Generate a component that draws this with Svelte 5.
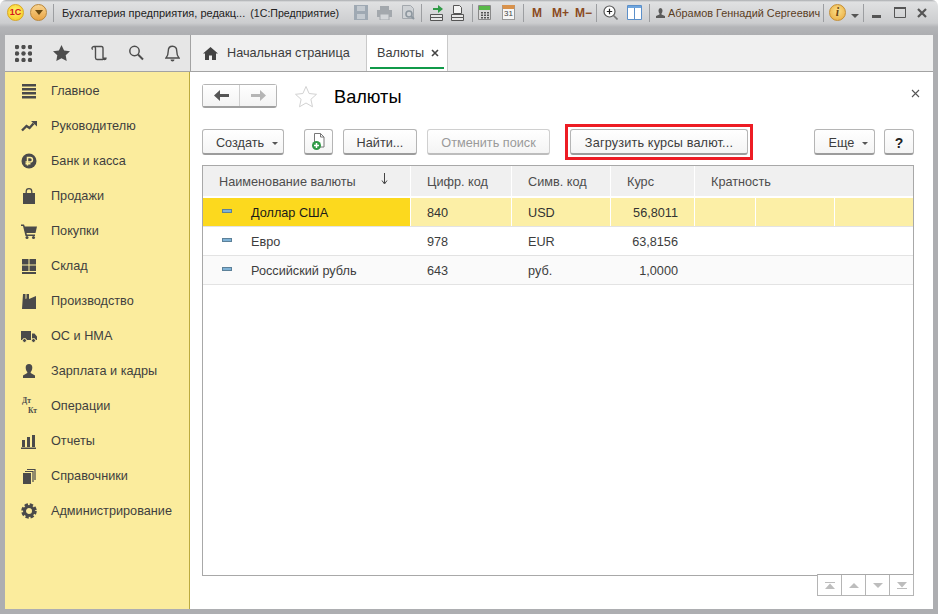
<script>
  const menu = [
    { label: 'Главное', icon: 'menu' },
    { label: 'Руководителю', icon: 'trend' },
    { label: 'Банк и касса', icon: 'ruble' },
    { label: 'Продажи', icon: 'bag' },
    { label: 'Покупки', icon: 'cart' },
    { label: 'Склад', icon: 'stock' },
    { label: 'Производство', icon: 'factory' },
    { label: 'ОС и НМА', icon: 'truck' },
    { label: 'Зарплата и кадры', icon: 'person' },
    { label: 'Операции', icon: 'dtkt' },
    { label: 'Отчеты', icon: 'bars' },
    { label: 'Справочники', icon: 'books' },
    { label: 'Администрирование', icon: 'gear' }
  ];

  const rows = [
    { name: 'Доллар США', code: '840', sym: 'USD', rate: '56,8011', selected: true },
    { name: 'Евро', code: '978', sym: 'EUR', rate: '63,8156' },
    { name: 'Российский рубль', code: '643', sym: 'руб.', rate: '1,0000', alt: true }
  ];
</script>

<div class="window">
  <header class="titlebar">
    <span class="logo">1С</span>
    <span class="menu-btn"><svg width="8" height="5" viewBox="0 0 8 5"><path d="M0 0h8L4 5z" fill="#6b4a12"/></svg></span>
    <span class="sep s1"></span>
    <span class="title-text">Бухгалтерия предприятия, редакц...&nbsp; <span class="app-name">(1С:Предприятие)</span></span>

    <svg class="ti t-save" width="14" height="15" viewBox="0 0 14 15"><path d="M0 0h14v15H0z" fill="#9fa9b3"/><path d="M3 1h8v5H3zM3 9h8v5H3z" fill="#c4cad0"/></svg>
    <svg class="ti t-print" width="15" height="14" viewBox="0 0 15 14"><path d="M3 0h9v4H3zM0 4h15v7H0z" fill="#a3a8ad"/><path d="M3 8h9v6H3z" fill="#d3d6d9" stroke="#a3a8ad"/></svg>
    <svg class="ti t-prev" width="15" height="15" viewBox="0 0 15 15"><path d="M1.5.5h8l3 3v10h-11z" fill="#cfd2d5" stroke="#a3a8ad"/><circle cx="8" cy="9" r="3" fill="none" stroke="#8d979f" stroke-width="1.6"/><path d="M10 11l3 3" stroke="#8d979f" stroke-width="2"/></svg>
    <span class="sep s2"></span>
    <svg class="ti t-imp" width="15" height="16" viewBox="0 0 15 16"><path d="M4 3h5V0l5 4-5 4V5H4z" fill="#2f9a46"/><path d="M1.5 9.5h12v3h-12zM1.5 12.5h12v3h-12z" fill="#e6e6e6" stroke="#555"/></svg>
    <svg class="ti t-exp" width="15" height="16" viewBox="0 0 15 16"><path d="M3.5.5h6l2 2v6h-8z" fill="#f4f4f4" stroke="#555"/><path d="M1.5 9.5h12v3h-12zM1.5 12.5h12v3h-12z" fill="#e6e6e6" stroke="#555"/></svg>
    <span class="sep s3"></span>
    <svg class="ti t-calc" width="13" height="15" viewBox="0 0 13 15"><path d="M.5.5h12v14H.5z" fill="#d9d9d9" stroke="#888"/><path d="M1 1h11v4H1z" fill="#58b848"/><path d="M3 7h2v1.5H3zM6 7h2v1.5H6zM9 7h2v1.5H9zM3 9.5h2V11H3zM6 9.5h2V11H6zM9 9.5h2V11H9zM3 12h2v1.5H3zM6 12h2v1.5H6zM9 12h2v1.5H9z" fill="#555"/></svg>
    <span class="cal t-cal">31</span>
    <span class="sep s4"></span>
    <span class="mem m0">M</span>
    <span class="mem m1">M+</span>
    <span class="mem m2">M−</span>
    <span class="sep s5"></span>
    <svg class="ti t-zoom" width="15" height="15" viewBox="0 0 15 15"><circle cx="6.5" cy="6.5" r="5.5" fill="#fff" stroke="#555" stroke-width="1.2"/><path d="M3.8 6.5h5.4M6.5 3.8v5.4" stroke="#222" stroke-width="1.2"/><path d="M10.5 10.5l4 4" stroke="#777" stroke-width="1.6"/></svg>
    <svg class="ti t-panel" width="15" height="15" viewBox="0 0 15 15"><path d="M.5.5h14v14H.5z" fill="#fff" stroke="#5b8fc9"/><path d="M1 1h13v2H1z" fill="#6ea5de"/><path d="M7.5 3v11" stroke="#5b8fc9"/></svg>
    <span class="sep s6"></span>
    <svg class="ti t-user" width="9" height="10" viewBox="0 0 9 10"><path d="M2.5 2.5a2 2.500 0 0 1 4 0c0 1.500-.6 2.500-1 3v1l3.500 1.500V10H0V8l3.500-1.500v-1c-.4-.5-1-1.500-1-3z" fill="#5b5b5b"/></svg>
    <span class="user-name">Абрамов Геннадий Сергеевич</span>
    <span class="sep s7"></span>
    <span class="info">i</span>
    <svg class="ti t-drop" width="8" height="4" viewBox="0 0 8 4"><path d="M0 0h8L4 4z" fill="#555"/></svg>
    <span class="sep s8"></span>
    <svg class="ti t-min" width="9" height="3" viewBox="0 0 9 3"><path d="M0 0h9v3H0z" fill="#555"/></svg>
    <svg class="ti t-max" width="12" height="11" viewBox="0 0 12 11"><path d="M.5 1h11v9.500H.5z" fill="none" stroke="#555"/><path d="M0 0h12v2H0z" fill="#555"/></svg>
    <svg class="ti t-close" width="10" height="10" viewBox="0 0 10 10"><path d="M1 1l8 8M9 1l-8 8" stroke="#555" stroke-width="2.200"/></svg>
  </header>

  <div class="frame">
    <div class="topbar">
      <div class="tools">
        <svg width="17" height="17" viewBox="0 0 17 17" fill="#4d4d4d">
          {#each [2, 8.500, 15] as y}
            {#each [2, 8.500, 15] as x}
              <circle cx={x} cy={y} r="2.200" />
            {/each}
          {/each}
        </svg>
        <svg width="17" height="16" viewBox="0 0 17 16"><path d="M8.500 0l2.600 5.400 5.900.8-4.300 4.100 1 5.700-5.200-2.800L3.300 16l1-5.700L0 6.200l5.900-.8z" fill="#4d4d4d"/></svg>
        <svg width="16" height="16" viewBox="0 0 16 16"><path d="M3 1.500h7.500c1 0 1.500.8 1.500 2V13c0 1 .6 1.500 1.500 1.500S15 14 15 13.200h-3M12 14.500H6c-1 0-1.500-.7-1.500-1.700V3.500c0-1.200-.6-2-1.500-2S1 2.300 1 3.200c0 .6.300 1 .8 1.300" fill="none" stroke="#4d4d4d" stroke-width="1.400"/></svg>
        <svg width="16" height="16" viewBox="0 0 16 16"><circle cx="6.500" cy="6" r="4.700" fill="none" stroke="#4d4d4d" stroke-width="1.500"/><path d="M10 9.500l5 5" stroke="#4d4d4d" stroke-width="2"/></svg>
        <svg width="15" height="17" viewBox="0 0 15 17"><path d="M7.500 1.200c-2.800 0-4.200 2-4.200 4.500 0 3.500-.8 5.500-2.300 7.300h13c-1.500-1.800-2.300-3.800-2.300-7.300 0-2.500-1.400-4.500-4.200-4.500z" fill="none" stroke="#4d4d4d" stroke-width="1.400"/><path d="M5.500 14.500a2 2 0 0 0 4 0z" fill="#4d4d4d"/></svg>
      </div>
      <nav class="tabs">
        <div class="tab home">
          <svg width="15" height="13" viewBox="0 0 15 13"><path d="M7.500 0L15 6.500h-2V13H9V8.500H6V13H2V6.500H0z" fill="#444"/></svg>
          <span>Начальная страница</span>
        </div>
        <div class="tab current">
          <span>Валюты</span>
          <svg width="8" height="8" viewBox="0 0 8 8"><path d="M1 1l6 6M7 1L1 7" stroke="#444" stroke-width="1.600"/></svg>
        </div>
      </nav>
    </div>

    <div class="body">
      <aside class="sidebar">
        {#each menu as item}
          <div class="side-item">
            <span class="side-icon">
              {#if item.icon === 'dtkt'}
                <span class="dt">Дт</span><span class="kt">Кт</span>
              {:else}
                <svg width="16" height="16" viewBox="0 0 16 16" fill="#4a4a4a">
                  {#if item.icon === 'menu'}
                    <path d="M1 1h14v2.500H1zM1 5h14v2.500H1zM1 9h14v2.500H1zM1 13h14v2.500H1z" />
                  {:else if item.icon === 'trend'}
                    <path d="M1 12.500l4.500-4.500 3 2 4-4.500" fill="none" stroke="#4a4a4a" stroke-width="2.400" />
                    <path d="M10 3h6v5.500z" />
                  {:else if item.icon === 'ruble'}
                    <circle cx="8" cy="8" r="7.500" />
                    <path d="M6.500 12.500V4.500h2.700a2 2 0 0 1 0 4.500H4.500M4.500 10.800h5" fill="none" stroke="#fbec9d" stroke-width="1.500" />
                  {:else if item.icon === 'bag'}
                    <path d="M2 5h12v11H2z" />
                    <path d="M5.200 7V3.500a2.800 2.800 0 0 1 5.600 0V7" fill="none" stroke="#4a4a4a" stroke-width="1.300" />
                  {:else if item.icon === 'cart'}
                    <path d="M0 1.500h3l.8 2H16l-1.500 6.500H5.500l.4 1.500H14V13H4.500L2 3H0z" />
                    <circle cx="6" cy="14.500" r="1.500" /><circle cx="12.500" cy="14.500" r="1.500" />
                  {:else if item.icon === 'stock'}
                    <path d="M1 1h6.500v5.500H1zM8.500 1H15v5.500H8.500zM1 7.500h6.500V13H1zM8.500 7.500H15V13H8.500zM1 14h14v2H1z" />
                  {:else if item.icon === 'factory'}
                    <path d="M2 1h2.500v5l1-.5V1H8v5l7-3v2.500L15 16H1z" />
                  {:else if item.icon === 'truck'}
                    <path d="M0 3h10v9H0zM11 5.500h2.500L16 8.500V12h-5z" />
                    <circle cx="3.500" cy="12.500" r="2" stroke="#fbec9d" /><circle cx="12.500" cy="12.500" r="2" stroke="#fbec9d" />
                  {:else if item.icon === 'person'}
                    <path d="M8 1c2.200 0 3.300 1.500 3.300 3.500S10.500 8 9.700 9v1l4.300 2.500V15H2v-2.500L6.300 10V9C5.500 8 4.700 6.500 4.700 4.500S5.800 1 8 1z" />
                  {:else if item.icon === 'bars'}
                    <path d="M1 7h3v7H1zM6 4h3v10H6zM11 2h3v12h-3zM0 14.500h15V16H0z" />
                  {:else if item.icon === 'books'}
                    <path d="M2 5h8v11H2z" />
                    <path d="M4 3.500h8V14M6 1.500h8V12" fill="none" stroke="#4a4a4a" stroke-width="1.200" />
                  {:else if item.icon === 'gear'}
                    <circle cx="8" cy="8" r="4.500" fill="none" stroke="#4a4a4a" stroke-width="3" />
                    <circle cx="8" cy="8" r="6.500" fill="none" stroke="#4a4a4a" stroke-width="2.500" stroke-dasharray="3.300 1.800" />
                  {/if}
                </svg>
              {/if}
            </span>
            <span>{item.label}</span>
          </div>
        {/each}
      </aside>

      <main class="content">
        <div class="head">
          <div class="nav-group">
            <span class="nav-btn">
              <svg width="15" height="11" viewBox="0 0 15 11"><path d="M6 0v4h9v3H6v4L0 5.500z" fill="#555"/></svg>
            </span>
            <span class="nav-btn">
              <svg width="15" height="11" viewBox="0 0 15 11"><path d="M9 0v4H0v3h9v4l6-5.500z" fill="#b5b5b5"/></svg>
            </span>
          </div>
          <svg class="fav" width="24" height="24" viewBox="0 0 24 24"><path d="M12 1.500l3.100 7 7.400.8-5.600 5 1.600 7.500-6.500-3.800-6.500 3.800 1.600-7.500-5.600-5 7.400-.8z" fill="#fff" stroke="#d2d2d2"/></svg>
          <h1>Валюты</h1>
          <svg class="close" width="9" height="9" viewBox="0 0 9 9"><path d="M1 1l7 7M8 1L1 8" stroke="#555" stroke-width="1.100"/></svg>
        </div>

        <div class="toolbar">
          <button class="btn create">Создать <i class="caret"></i></button>
          <button class="btn add">
            <svg width="15" height="18" viewBox="0 0 15 18"><path d="M3.500.5h6l3.500 3.500v10h-9.500z" fill="#fff" stroke="#777"/><path d="M9.500.5V4H13" fill="none" stroke="#777"/><circle cx="5.500" cy="12.500" r="4.500" fill="#2f9a46"/><path d="M3 12.500h5M5.500 10v5" stroke="#fff" stroke-width="1.500"/></svg>
          </button>
          <button class="btn find">Найти...</button>
          <button class="btn cancel">Отменить поиск</button>
          <span class="highlight"><button class="btn load">Загрузить курсы валют...</button></span>
          <button class="btn more">Еще <i class="caret"></i></button>
          <button class="btn help">?</button>
        </div>

        <div class="grid">
          <div class="row header">
            <div class="cell c-name">
              Наименование валюты
              <svg class="sort" width="7" height="12" viewBox="0 0 7 12"><path d="M3.500 0v10M1 7.500l2.500 3.500L6 7.500" fill="none" stroke="#444"/></svg>
            </div>
            <div class="cell c-code">Цифр. код</div>
            <div class="cell c-sym">Симв. код</div>
            <div class="cell c-rate">Курс</div>
            <div class="cell c-mult">Кратность</div>
          </div>
          {#each rows as row}
            <div class="row data" class:selected={row.selected} class:alt={row.alt}>
              <div class="cell c-name name-cell"><i class="mark"></i>{row.name}</div>
              <div class="cell c-code">{row.code}</div>
              <div class="cell c-sym">{row.sym}</div>
              <div class="cell c-rate num">{row.rate}</div>
              <div class="cell c-mult"></div>
              {#if row.selected}
                <div class="cell c-extra"></div>
                <div class="cell c-extra2"></div>
              {/if}
            </div>
          {/each}
          <div class="pager">
            <span><svg width="10" height="7" viewBox="0 0 10 7"><path d="M0 0h10v1H0zM5 1.500L10 7H0z" fill="#bdbdbd"/></svg></span>
            <span><svg width="10" height="5" viewBox="0 0 10 5"><path d="M5 0L10 5H0z" fill="#bdbdbd"/></svg></span>
            <span><svg width="10" height="5" viewBox="0 0 10 5"><path d="M5 5L10 0H0z" fill="#bdbdbd"/></svg></span>
            <span><svg width="10" height="7" viewBox="0 0 10 7"><path d="M0 7h10V6H0zM5 5.500L10 0H0z" fill="#bdbdbd"/></svg></span>
          </div>
        </div>
      </main>
    </div>
  </div>
</div>

<style>
  :global(body) {
    background: #fff;
    font-family: "Liberation Sans", Arial, sans-serif;
  }

  .window {
    width: 938px;
    height: 614px;
    box-sizing: border-box;
    display: flex;
    flex-direction: column;
    padding: 0 5px 5px;
    border-radius: 6px 6px 0 0;
    background: linear-gradient(#a9abae 0, #e0e1e2 2px, #cccdcf 23px, #b4b5b8 27px, #adaeb1 35px, #adaeb1 100%);
    overflow: hidden;
  }

  .titlebar {
    height: 35px;
    flex: none;
    display: flex;
    align-items: center;
    padding-bottom: 10px;
    box-sizing: border-box;
    font-size: 11px;
    color: #222;
  }

  .ti { flex: none; }

  .logo {
    width: 17px;
    height: 17px;
    margin-left: 2px;
    border-radius: 50%;
    background: radial-gradient(circle at 50% 40%, #fff36b, #f6c51c);
    border: 1px solid #d9a521;
    box-sizing: border-box;
    color: #d6141c;
    font: bold 9px/15px "Liberation Sans", sans-serif;
    text-align: center;
  }

  .menu-btn {
    width: 17px;
    height: 17px;
    margin-left: 6px;
    border-radius: 50%;
    background: linear-gradient(#f8d490, #e9a444);
    border: 1px solid #b9863a;
    box-sizing: border-box;
    display: flex;
    align-items: center;
    justify-content: center;
  }

  .sep {
    width: 1px;
    height: 18px;
    flex: none;
    background: #9c9ea1;
  }
  .s1 { margin-left: 6px; }
  .title-text { margin-left: 8px; white-space: nowrap; width: 284px; }
  .app-name { font-size: 10.600px; margin-left: -1px; }
  .t-save { margin-left: 8px; }
  .t-print { margin-left: 9px; }
  .t-prev { margin-left: 9px; }
  .s2 { margin-left: 5px; }
  .t-imp { margin-left: 7px; }
  .t-exp { margin-left: 6px; }
  .s3 { margin-left: 7px; }
  .t-calc { margin-left: 5px; }
  .cal {
    margin-left: 11px;
    width: 13px;
    height: 15px;
    box-sizing: border-box;
    border: 1px solid #999;
    border-top: 4px solid #d9924b;
    background: #f6f6f6;
    font: 8px/10px "Liberation Sans", sans-serif;
    color: #444;
    text-align: center;
    flex: none;
  }
  .s4 { margin-left: 8px; }
  .mem { color: #8a4a22; font-weight: bold; font-size: 12px; flex: none; }
  .m0 { margin-left: 8px; }
  .m1 { margin-left: 10px; }
  .m2 { margin-left: 6px; }
  .s5 { margin-left: 4px; }
  .t-zoom { margin-left: 6px; }
  .t-panel { margin-left: 9px; }
  .s6 { margin-left: 7px; }
  .t-user { margin-left: 6px; }
  .user-name { margin-left: 3px; width: 152px; white-space: nowrap; color: #5a3d1e; font-size: 10.900px; }
  .s7 { margin-left: 3px; }
  .info {
    width: 17px;
    height: 17px;
    margin-left: 5px;
    flex: none;
    border-radius: 50%;
    background: radial-gradient(circle at 50% 40%, #fbe08a, #e8a83c);
    border: 1px solid #c48f34;
    box-sizing: border-box;
    color: #6b4412;
    font: italic bold 12px/15px "Liberation Serif", serif;
    text-align: center;
  }
  .t-drop { margin-left: 5px; margin-top: 7px; }
  .s8 { margin-left: 4px; }
  .t-min { margin-left: 8px; margin-top: 7px; }
  .t-max { margin-left: 13px; }
  .t-close { margin-left: 11px; }

  .frame {
    flex: 1;
    min-height: 0;
    display: flex;
    flex-direction: column;
    background: #fff;
  }

  .topbar {
    height: 37px;
    flex: none;
    display: flex;
    background: #f0f0f0;
    border-bottom: 1px solid #a3a3a3;
    box-sizing: border-box;
  }

  .tools {
    width: 186px;
    flex: none;
    box-sizing: border-box;
    display: flex;
    align-items: center;
    gap: 21px;
    padding-left: 10px;
    background: #e6e6e6;
    border-right: 1px solid #a3a3a3;
  }

  .tabs { display: flex; font-size: 12.700px; color: #3d3d3d; }

  .tab {
    height: 100%;
    box-sizing: border-box;
    display: flex;
    align-items: center;
  }

  .home {
    width: 176px;
    padding-left: 12px;
    gap: 9px;
    border-right: 1px solid #c9c9c9;
  }

  .current {
    width: 81px;
    padding-left: 10px;
    gap: 7px;
    background: #fff;
    border-right: 1px solid #c9c9c9;
    position: relative;
  }

  .current::after {
    content: '';
    position: absolute;
    left: 3px;
    right: 3px;
    bottom: 2px;
    height: 2px;
    background: #109a49;
  }

  .body { flex: 1; min-height: 0; display: flex; }

  .sidebar {
    width: 185px;
    flex: none;
    box-sizing: border-box;
    padding-top: 1px;
    background: #fbec9d;
    border-right: 1px solid #bcab3f;
    font-size: 12.700px;
    color: #3f3f3f;
  }

  .side-item {
    height: 35px;
    display: flex;
    align-items: center;
    gap: 14px;
    padding-left: 16px;
    white-space: nowrap;
  }

  .side-icon {
    width: 16px;
    height: 16px;
    flex: none;
    display: block;
    position: relative;
    line-height: 0;
  }

  .dt, .kt {
    position: absolute;
    font: bold 7.500px/8px "Liberation Serif", serif;
    color: #4a4a4a;
  }
  .dt { left: 1px; top: -1px; }
  .kt { right: 0; top: 9px; }

  .content {
    flex: 1;
    min-width: 0;
    box-sizing: border-box;
    padding: 12px 19px 33px 12px;
    display: flex;
    flex-direction: column;
  }

  .head { display: flex; align-items: center; height: 24px; position: relative; }

  .nav-group {
    display: flex;
    height: 24px;
    box-sizing: border-box;
    border: 1px solid #b5b5b5;
    border-bottom: 2px solid #a0a0a0;
    border-radius: 3px;
  }

  .nav-btn {
    width: 36px;
    display: flex;
    align-items: center;
    justify-content: center;
    background: linear-gradient(#fff, #f3f3f3);
  }
  .nav-btn + .nav-btn { border-left: 1px solid #d0d0d0; }

  .fav { margin-left: 17px; margin-top: 1px; flex: none; }

  h1 {
    margin: 3px 0 0 16px;
    font-size: 18.200px;
    font-weight: normal;
    color: #000;
  }

  .close { position: absolute; right: -6px; top: 5px; }

  .toolbar {
    display: flex;
    align-items: center;
    height: 26px;
    margin-top: 21px;
  }

  .btn {
    height: 26px;
    box-sizing: border-box;
    padding: 3px 0 0;
    display: flex;
    align-items: center;
    justify-content: center;
    flex: none;
    border: 1px solid #b5b5b5;
    border-bottom: 2px solid #9c9c9c;
    border-radius: 3px;
    background: linear-gradient(#fff, #f4f4f4);
    font: 12.700px "Liberation Sans", sans-serif;
    color: #3d3d3d;
  }

  .caret {
    width: 0;
    height: 0;
    margin-left: 8px;
    margin-top: 1px;
    border: 3px solid transparent;
    border-top: 3px solid #555;
    border-bottom: 0;
  }

  .create { width: 82px; padding-left: 8px; }
  .add { width: 29px; margin-left: 20px; padding: 0; }
  .find { width: 74px; margin-left: 10px; }
  .cancel {
    width: 123px;
    margin-left: 10px;
    color: #9a9a9a;
    border-color: #d0d0d0;
    border-bottom-color: #bdbdbd;
  }

  .highlight {
    margin-left: 15px;
    padding: 2px;
    border: 3px solid #ed1c24;
    flex: none;
  }
  .load { width: 178px; letter-spacing: .15px; }
  .more { width: 61px; margin-left: 61px; padding-left: 8px; }
  .help { width: 30px; margin-left: 9px; font-weight: bold; font-size: 14px; color: #222; }

  .grid {
    flex: 1;
    min-height: 0;
    margin-top: 10px;
    border: 1px solid #a8a8a8;
    position: relative;
    font-size: 12.700px;
    color: #3d3d3d;
  }

  .row { display: flex; box-sizing: border-box; }

  .header {
    height: 31px;
    background: #f0f0f0;
    border-bottom: 1px solid #fff;
    color: #4d4d4d;
  }
  .header .cell { padding-top: 2px; }

  .data {
    height: 29px;
    border-bottom: 1px solid #e3e3e3;
  }
  .data .cell { padding-top: 1px; }
  .data.selected { height: 28px; background: #fcefa6; color: #333; margin-top: 1px; border-bottom: 0; }
  .data.selected + .data { border-top: 1px solid #e3e3e3; height: 30px; }
  .data.alt { background: #fafafa; }

  .cell {
    box-sizing: border-box;
    display: flex;
    align-items: center;
    padding-left: 16px;
    white-space: nowrap;
    border-right: 1px solid transparent;
  }

  .c-name { width: 208px; position: relative; }
  .c-code { width: 101px; }
  .c-sym { width: 99px; }
  .c-rate { width: 84px; }
  .c-mult { flex: 1; }

  .header .cell, .selected .cell { border-right-color: #fff; }
  .header .c-mult, .selected .c-extra2 { border-right: 0; }

  .selected .c-mult { flex: none; width: 61px; }
  .selected .c-extra { width: 79px; }
  .selected .c-extra2 { flex: 1; }

  .selected .c-name { background: #fcd91e; color: #1a1a1a; }

  .name-cell { padding-left: 48px; }
  .mark {
    position: absolute;
    left: 19px;
    top: 50%;
    margin-top: -3px;
    width: 10px;
    height: 4px;
    box-sizing: border-box;
    background: #7fb2d6;
    border: 1px solid #5d8199;
  }

  .num { justify-content: flex-end; padding-left: 0; padding-right: 16px; }

  .sort { position: absolute; left: 178px; top: 7px; }

  .pager {
    position: absolute;
    right: -1px;
    bottom: -21px;
    display: flex;
    border: 1px solid #b5b5b5;
    border-top-color: #a8a8a8;
    background: #fff;
  }

  .pager span {
    width: 24px;
    height: 20px;
    box-sizing: border-box;
    display: flex;
    align-items: center;
    justify-content: center;
    border-right: 1px solid #b5b5b5;
  }
  .pager span:last-child { width: 23px; border-right: 0; }
</style>
